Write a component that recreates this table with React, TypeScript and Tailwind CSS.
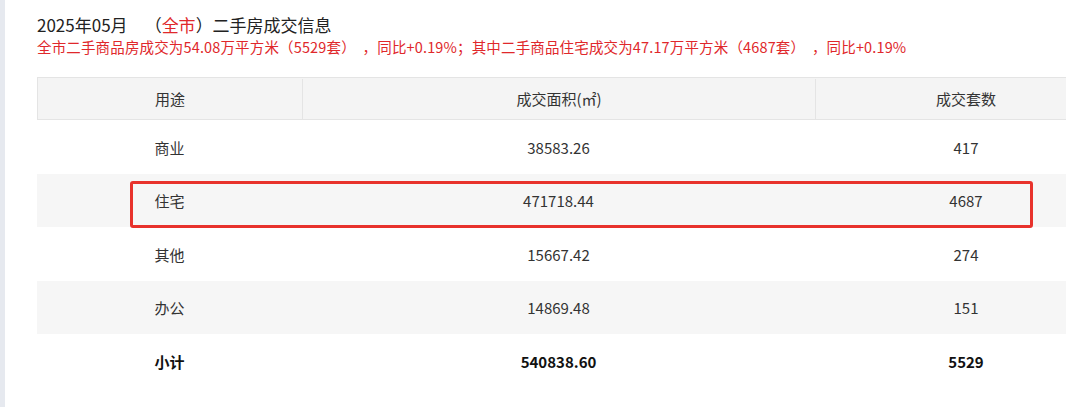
import React from 'react'

const rows = [
  { use: '商业', area: '38583.26', count: '417' },
  { use: '住宅', area: '471718.44', count: '4687' },
  { use: '其他', area: '15667.42', count: '274' },
  { use: '办公', area: '14869.48', count: '151' },
]

const font = { fontFamily: '"Microsoft YaHei", "Noto Sans CJK SC", "Noto Sans", sans-serif' }

export default function App() {
  return (
    <div className="flex h-[407px] w-[1066px] overflow-hidden bg-white" style={font}>
      <div className="w-[5px] shrink-0 bg-[#e6e9ef]" />
      <div className="flex-1 pl-[32px] pt-[12px]">
        <h2 className="text-[17px] leading-[25px] text-[#222]">
          2025年05月<span className="ml-[17px]">（<span className="text-[#e0282b]">全市</span>）二手房成交信息</span>
        </h2>
        <p className="whitespace-pre text-[14.5px] leading-[19px] tracking-[0.15px] text-[#e0282b]">
          全市二手商品房成交为54.08万平方米（5529套）  ，同比+0.19%；其中二手商品住宅成交为47.17万平方米（4687套）  ，同比+0.19%
        </p>

        <div className="relative mt-[21px] w-[1080px] text-[15px] text-[#333]">
          <div className="flex h-[43px] border border-[#e4e4e4] bg-[#f4f4f4] pt-[1px]">
            <div className="flex w-[265px] items-center justify-center border-r border-[#e4e4e4]">用途</div>
            <div className="flex w-[513px] items-center justify-center border-r border-[#e4e4e4]">成交面积(㎡)</div>
            <div className="flex flex-1 items-center justify-center">成交套数</div>
          </div>
          {rows.map((r, i) => (
            <div key={r.use} className={`flex h-[53.5px] pt-[2px] ${i % 2 === 1 ? 'bg-[#f6f6f6]' : 'bg-white'}`}>
              <div className="flex w-[265px] items-center justify-center">{r.use}</div>
              <div className="flex w-[513px] items-center justify-center">{r.area}</div>
              <div className="flex flex-1 items-center justify-center">{r.count}</div>
            </div>
          ))}
          <div className="flex h-[53.5px] pt-[2px] font-bold text-[#111]">
            <div className="flex w-[265px] items-center justify-center">小计</div>
            <div className="flex w-[513px] items-center justify-center">540838.60</div>
            <div className="flex flex-1 items-center justify-center">5529</div>
          </div>

          {/* highlight annotation */}
          <div className="pointer-events-none absolute left-[93px] top-[104px] h-[47px] w-[903px] rounded-[3px] border-[3px] border-[#e8322c]" />
        </div>
      </div>
    </div>
  )
}
